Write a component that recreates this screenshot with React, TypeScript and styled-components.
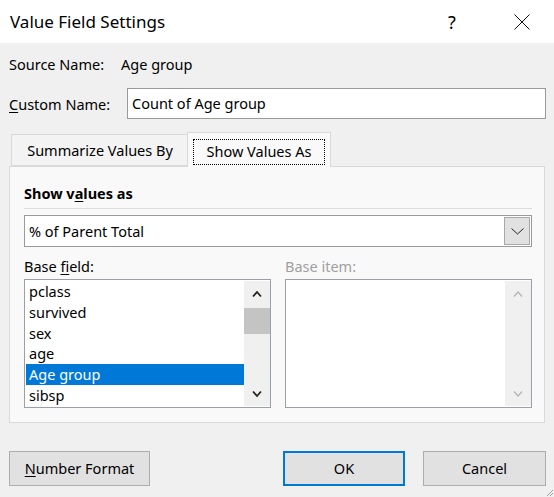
import React from 'react';
import styled, { createGlobalStyle } from 'styled-components';

const Global = createGlobalStyle`
  html, body { margin: 0; padding: 0; background: #f0f0f0; }
  body {
    font-family: "Noto Sans", "Open Sans", sans-serif;
    font-size: 14.5px;
    color: #000;
  }
  * { box-sizing: border-box; }
`;

const Window = styled.div`
  position: relative;
  width: 554px;
  height: 497px;
  display: flex;
  flex-direction: column;
  background: #f0f0f0;
  overflow: hidden;
`;

const TitleBar = styled.div`
  flex-shrink: 0;
  height: 43px;
  background: #fff;
  display: flex;
  align-items: center;
  padding: 0 9px 0 10px;
`;

const Title = styled.div`
  flex: 1;
  font-size: 17px;
  color: #000;
`;

const CaptionButton = styled.div<{ $w: number }>`
  width: ${p => p.$w}px;
  height: 43px;
  display: flex;
  align-items: center;
  justify-content: center;
  font-size: 18px;
`;

const Body = styled.div`
  flex: 1;
  display: flex;
  flex-direction: column;
  padding: 0 8px 0 9px;
`;

const Row = styled.div<{ $top: number; $h: number }>`
  display: flex;
  align-items: center;
  margin-top: ${p => p.$top}px;
  height: ${p => p.$h}px;
`;

const Label = styled.span<{ $w: number }>`
  width: ${p => p.$w}px;
  flex-shrink: 0;
`;

const TextInput = styled.div`
  flex: 1;
  height: 100%;
  border: 1px solid #9a9a9a;
  background: #fff;
  display: flex;
  align-items: center;
  padding-left: 4px;
  padding-bottom: 2px;
`;

const TabStrip = styled.div`
  display: flex;
  align-items: flex-end;
  margin-top: 13px;
  height: 34px;
  padding-left: 2px;
  position: relative;
  z-index: 1;
`;

const Tab = styled.div<{ $active?: boolean }>`
  display: flex;
  align-items: center;
  justify-content: center;
  height: ${p => (p.$active ? 35 : 32)}px;
  margin-bottom: ${p => (p.$active ? -1 : 0)}px;
  width: ${p => (p.$active ? 144 : 178)}px;
  margin-left: ${p => (p.$active ? -2 : 0)}px;
  background: ${p => (p.$active ? '#f9f9f9' : '#f3f3f3')};
  border: 1px solid #d9d9d9;
  border-bottom: ${p => (p.$active ? 'none' : '1px solid #d9d9d9')};
`;

const FocusRect = styled.div`
  width: 132px;
  height: 26px;
  margin-top: 4px;
  border: 1px dotted #000;
  display: flex;
  align-items: center;
  justify-content: center;
  padding-bottom: 2px;
`;

const Panel = styled.div`
  width: 536px;
  height: 257px;
  background: #f9f9f9;
  border: 1px solid #d9d9d9;
  padding: 0 12px 0 14px;
  display: flex;
  flex-direction: column;
`;

const SectionTitle = styled.div`
  font-weight: bold;
  margin-top: 14px;
  height: 28px;
  display: flex;
  align-items: center;
  border-bottom: 1px solid #dcdcdc;
  padding-bottom: 4px;
`;

const Combo = styled.div`
  margin-top: 6px;
  height: 32px;
  border: 1px solid #9a9a9a;
  background: #fff;
  display: flex;
  align-items: center;
  padding: 1px 1px 1px 4px;
`;

const ComboText = styled.span`
  flex: 1;
`;

const ComboButton = styled.div`
  width: 26px;
  height: 28px;
  background: #e1e1e1;
  border: 1px solid #a8a8a8;
  display: flex;
  align-items: center;
  justify-content: center;
`;

const Columns = styled.div`
  display: grid;
  grid-template-columns: 247px 247px;
  column-gap: 14px;
  margin-top: 8px;
`;

const Field = styled.div`
  display: flex;
  flex-direction: column;
`;

const FieldLabel = styled.div<{ $disabled?: boolean }>`
  height: 24px;
  display: flex;
  align-items: center;
  padding-bottom: 3px;
  color: ${p => (p.$disabled ? '#a0a0a0' : '#000')};
`;

const ListBox = styled.div`
  height: 129px;
  border: 1px solid #9aa0a8;
  background: #fff;
  display: flex;
  padding: 1px 0 1px 1px;
`;

const Items = styled.div`
  flex: 1;
  display: flex;
  flex-direction: column;
`;

const Item = styled.div<{ $selected?: boolean }>`
  height: 21px;
  line-height: 20px;
  padding-left: 3px;
  background: ${p => (p.$selected ? '#0078d7' : 'transparent')};
  color: ${p => (p.$selected ? '#fff' : '#000')};
`;

const ScrollBar = styled.div`
  width: 26px;
  background: #f0f0f0;
  display: flex;
  flex-direction: column;
`;

const ScrollArrow = styled.div`
  height: 25px;
  display: flex;
  align-items: center;
  justify-content: center;
`;

const Thumb = styled.div`
  height: 26px;
  margin-top: 2px;
  background: #c4c4c4;
`;

const Track = styled.div`
  flex: 1;
`;

const Footer = styled.div`
  display: flex;
  margin-top: 28px;
  height: 35px;
`;

const Button = styled.div<{ $w: number; $default?: boolean; $ml?: number }>`
  width: ${p => p.$w}px;
  margin-left: ${p => p.$ml ?? 0}px;
  height: 35px;
  background: #e1e1e1;
  border: ${p => (p.$default ? '2px solid #0078d7' : '1px solid #adadad')};
  display: flex;
  align-items: center;
  justify-content: center;
  padding-bottom: 2px;
`;

const Spacer = styled.div`
  flex: 1;
`;

const Grip = styled.svg`
  position: absolute;
  right: 0;
  bottom: 0;
`;

const U = styled.span`
  text-decoration: underline;
  text-underline-offset: 2px;
`;

const Up = ({ disabled }: { disabled?: boolean }) => (
  <svg width="10" height="8" viewBox="0 0 10 8">
    <polyline points="1,6.5 5,2 9,6.5" fill="none" stroke={disabled ? '#b4b4b4' : '#222'} strokeWidth={disabled ? 1.2 : 1.8} />
  </svg>
);

const Down = ({ disabled }: { disabled?: boolean }) => (
  <svg width="10" height="8" viewBox="0 0 10 8">
    <polyline points="1,1.5 5,6 9,1.5" fill="none" stroke={disabled ? '#b4b4b4' : '#222'} strokeWidth={disabled ? 1.2 : 1.8} />
  </svg>
);

const items = ['pclass', 'survived', 'sex', 'age', 'Age group', 'sibsp'];

export default function App() {
  return (
    <Window>
      <Global />
      <TitleBar>
        <Title>Value Field Settings</Title>
        <CaptionButton $w={46}>?</CaptionButton>
        <CaptionButton $w={24} />
        <CaptionButton $w={46}>
          <svg width="16" height="16" viewBox="0 0 16 16">
            <path d="M0.5 0.5 L15.5 15.5 M15.5 0.5 L0.5 15.5" stroke="#111" strokeWidth="1" />
          </svg>
        </CaptionButton>
      </TitleBar>
      <Body>
        <Row $top={6} $h={30}>
          <Label $w={112}>Source Name:</Label>
          <span>Age group</span>
        </Row>
        <Row $top={9} $h={31}>
          <Label $w={118}>
            <U>C</U>ustom Name:
          </Label>
          <TextInput>Count of Age group</TextInput>
        </Row>
        <TabStrip>
          <Tab>Summarize Values By</Tab>
          <Tab $active>
            <FocusRect>Show Values As</FocusRect>
          </Tab>
        </TabStrip>
        <Panel>
          <SectionTitle>
            <span>
              Show v<U>a</U>lues as
            </span>
          </SectionTitle>
          <Combo>
            <ComboText>% of Parent Total</ComboText>
            <ComboButton>
              <svg width="13" height="7" viewBox="0 0 13 7">
                <polyline points="0.5,0.5 6.5,6 12.5,0.5" fill="none" stroke="#222" strokeWidth="1" />
              </svg>
            </ComboButton>
          </Combo>
          <Columns>
            <Field>
              <FieldLabel>
                <span>
                  Base <U>f</U>ield:
                </span>
              </FieldLabel>
              <ListBox>
                <Items>
                  {items.map(i => (
                    <Item key={i} $selected={i === 'Age group'}>
                      {i}
                    </Item>
                  ))}
                </Items>
                <ScrollBar>
                  <ScrollArrow>
                    <Up />
                  </ScrollArrow>
                  <Thumb />
                  <Track />
                  <ScrollArrow>
                    <Down />
                  </ScrollArrow>
                </ScrollBar>
              </ListBox>
            </Field>
            <Field>
              <FieldLabel $disabled>Base item:</FieldLabel>
              <ListBox>
                <Items />
                <ScrollBar>
                  <ScrollArrow>
                    <Up disabled />
                  </ScrollArrow>
                  <Track />
                  <ScrollArrow>
                    <Down disabled />
                  </ScrollArrow>
                </ScrollBar>
              </ListBox>
            </Field>
          </Columns>
        </Panel>
        <Footer>
          <Button $w={141}>
            <span>
              <U>N</U>umber Format
            </span>
          </Button>
          <Spacer />
          <Button $w={122} $default>
            OK
          </Button>
          <Button $w={123} $ml={18}>
            Cancel
          </Button>
        </Footer>
      </Body>
      <Grip width="9" height="9" viewBox="0 0 9 9">
        <path d="M8 2 L2 8 M8 5 L5 8" stroke="#a0a0a0" strokeWidth="1" />
      </Grip>
    </Window>
  );
}
